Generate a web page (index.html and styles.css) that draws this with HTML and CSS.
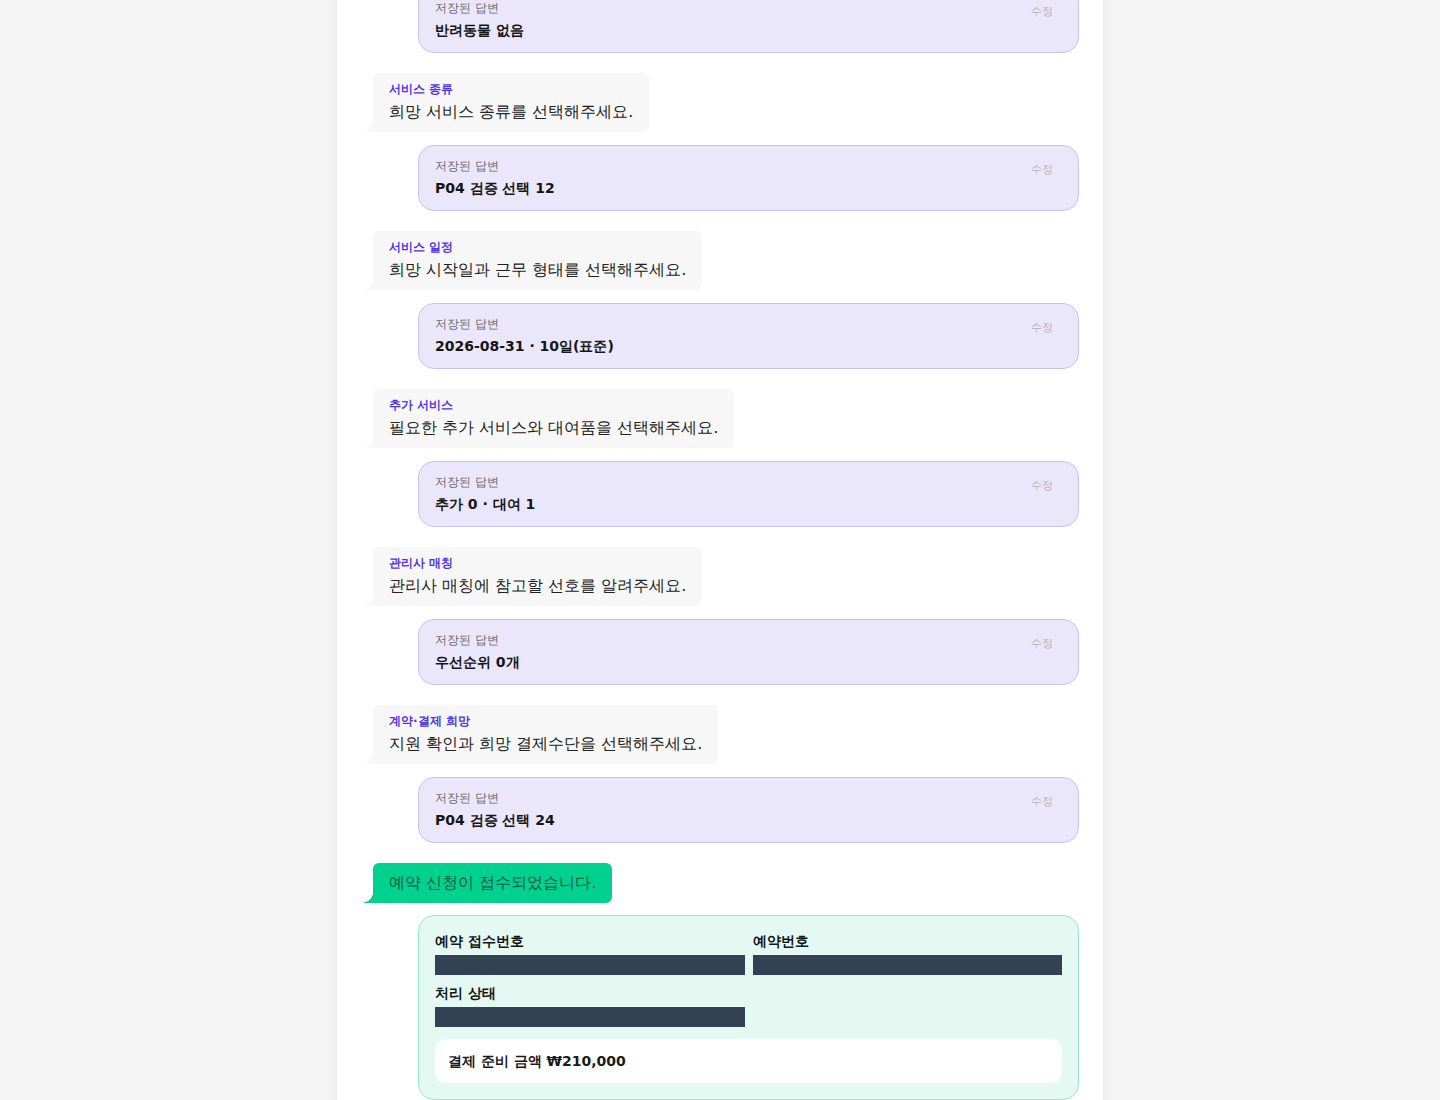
FILE: index.html
```html
<!DOCTYPE html>
<html>
<head>
<meta charset="utf-8">
<title>예약 채팅</title>
<link rel="stylesheet" href="styles.css">
</head>
<body>
<main class="page">
  <div class="chat">
    <div class="answer">
      <div class="answer-head"><span class="answer-label">저장된 답변</span><button class="edit">수정</button></div>
      <div class="answer-value">반려동물 없음</div>
    </div>

    <div class="bubble">
      <div class="bubble-label">서비스 종류</div>
      <div class="bubble-text">희망 서비스 종류를 선택해주세요.</div>
    </div>
    <div class="answer">
      <div class="answer-head"><span class="answer-label">저장된 답변</span><button class="edit">수정</button></div>
      <div class="answer-value">P04 검증 선택 12</div>
    </div>

    <div class="bubble">
      <div class="bubble-label">서비스 일정</div>
      <div class="bubble-text">희망 시작일과 근무 형태를 선택해주세요.</div>
    </div>
    <div class="answer">
      <div class="answer-head"><span class="answer-label">저장된 답변</span><button class="edit">수정</button></div>
      <div class="answer-value">2026-08-31 · 10일(표준)</div>
    </div>

    <div class="bubble">
      <div class="bubble-label">추가 서비스</div>
      <div class="bubble-text">필요한 추가 서비스와 대여품을 선택해주세요.</div>
    </div>
    <div class="answer">
      <div class="answer-head"><span class="answer-label">저장된 답변</span><button class="edit">수정</button></div>
      <div class="answer-value">추가 0 · 대여 1</div>
    </div>

    <div class="bubble">
      <div class="bubble-label">관리사 매칭</div>
      <div class="bubble-text">관리사 매칭에 참고할 선호를 알려주세요.</div>
    </div>
    <div class="answer">
      <div class="answer-head"><span class="answer-label">저장된 답변</span><button class="edit">수정</button></div>
      <div class="answer-value">우선순위 0개</div>
    </div>

    <div class="bubble">
      <div class="bubble-label">계약·결제 희망</div>
      <div class="bubble-text">지원 확인과 희망 결제수단을 선택해주세요.</div>
    </div>
    <div class="answer">
      <div class="answer-head"><span class="answer-label">저장된 답변</span><button class="edit">수정</button></div>
      <div class="answer-value">P04 검증 선택 24</div>
    </div>

    <div class="bubble bubble-success">
      <div class="bubble-text">예약 신청이 접수되었습니다.</div>
    </div>
    <div class="result">
      <div class="result-grid">
        <div class="field">
          <div class="field-label">예약 접수번호</div>
          <div class="field-bar"></div>
        </div>
        <div class="field">
          <div class="field-label">예약번호</div>
          <div class="field-bar"></div>
        </div>
        <div class="field">
          <div class="field-label">처리 상태</div>
          <div class="field-bar"></div>
        </div>
      </div>
      <div class="amount">결제 준비 금액 ₩210,000</div>
    </div>
  </div>
</main>
</body>
</html>
```

FILE: styles.css
```css
* { box-sizing: border-box; }

html, body {
  margin: 0;
  padding: 0;
}

body {
  background: #f5f5f5;
  font-family: "DejaVu Sans", system-ui, sans-serif;
  color: #1f1f1f;
  overflow: hidden;
}

.page {
  width: 766px;
  min-height: 100vh;
  margin: 0 auto;
  background: #ffffff;
  box-shadow: 0 0 14px rgba(0, 0, 0, 0.06);
  padding: 0 24px 24px;
}

.chat {
  display: flex;
  flex-direction: column;
  align-items: flex-start;
  margin-top: -13px;
}

.bubble {
  position: relative;
  margin-left: 12px;
  margin-bottom: 13px;
  background: #f7f7f7;
  border-radius: 6px 6px 6px 0;
  padding: 8px 16px 9px;
}

.bubble::before {
  content: "";
  position: absolute;
  left: -12px;
  bottom: 0;
  width: 12px;
  height: 10px;
  background: radial-gradient(ellipse 12px 10px at 0 0, transparent 97%, #f7f7f7 100%);
}

.bubble-label {
  font-size: 12px;
  line-height: 16px;
  font-weight: 600;
  color: #4f35e8;
  margin-bottom: 4px;
}

.bubble-text {
  font-size: 16px;
  line-height: 22px;
  color: #222222;
}

.bubble-success {
  background: #00d18f;
  padding: 9px 16px 9px;
  margin-bottom: 12px;
}

.bubble-success::before {
  background: radial-gradient(ellipse 12px 10px at 0 0, transparent 97%, #00d18f 100%);
}

.bubble-success .bubble-text {
  color: #1d5a45;
}

.answer {
  align-self: stretch;
  margin-left: 57px;
  margin-bottom: 20px;
  background: #ebe7fb;
  border: 1px solid #c9c1f3;
  border-radius: 16px;
  padding: 12px 16px 12px;
}

.answer-head {
  display: flex;
  justify-content: space-between;
  align-items: flex-start;
  height: 16px;
  margin-bottom: 4px;
}

.answer-label {
  font-size: 12px;
  line-height: 16px;
  color: #6b6b6b;
}

.edit {
  font-family: inherit;
  font-size: 11px;
  line-height: 16px;
  color: #b3b3b3;
  background: transparent;
  border: 0;
  padding: 4px 9px 0;
  cursor: pointer;
}

.answer-value {
  font-size: 14px;
  line-height: 20px;
  font-weight: 700;
  color: #151515;
}

.result {
  align-self: stretch;
  margin-left: 57px;
  background: #e3f9f1;
  border: 1px solid #94e9cb;
  border-radius: 16px;
  padding: 15px 16px 16px;
}

.result-grid {
  display: grid;
  grid-template-columns: 1fr 1fr;
  column-gap: 8px;
  row-gap: 8px;
}

.field-label {
  font-size: 14px;
  line-height: 20px;
  font-weight: 700;
  color: #151515;
  margin-bottom: 4px;
}

.field-bar {
  height: 20px;
  background: #334155;
}

.amount {
  margin-top: 12px;
  background: #ffffff;
  border-radius: 10px;
  padding: 12px 13px;
  font-size: 14px;
  line-height: 20px;
  font-weight: 700;
  color: #1a1a1a;
}
```
